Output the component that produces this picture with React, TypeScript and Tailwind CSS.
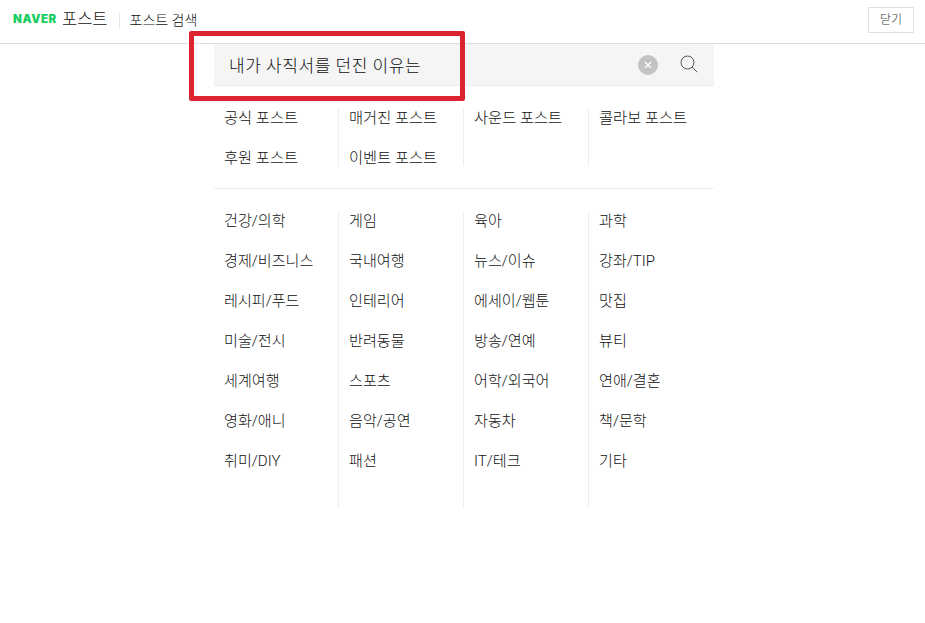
const top = [["공식 포스트", "매거진 포스트", "사운드 포스트", "콜라보 포스트"], ["후원 포스트", "이벤트 포스트"]];
const cols = [
  ["건강/의학", "경제/비즈니스", "레시피/푸드", "미술/전시", "세계여행", "영화/애니", "취미/DIY"],
  ["게임", "국내여행", "인테리어", "반려동물", "스포츠", "음악/공연", "패션"],
  ["육아", "뉴스/이슈", "에세이/웹툰", "방송/연예", "어학/외국어", "자동차", "IT/테크"],
  ["과학", "강좌/TIP", "맛집", "뷰티", "연애/결혼", "책/문학", "기타"],
];
const font = "[font-family:Roboto,'Noto_Sans_CJK_KR',sans-serif]";

export default function App() {
  return (
    <div className={`relative h-[623px] w-[925px] overflow-hidden bg-white font-light text-[#111] ${font}`}>
      <header className="flex h-[44px] items-center border-b border-[#dedede] pb-[3px] pl-[13px] pr-[11px]">
        <span className="w-[44px] text-[11.5px] font-black leading-none tracking-[0.6px] text-[#19ce60] [font-family:Inter,sans-serif]">NAVER</span>
        <span className="ml-[5px] text-[16.5px] leading-none">포스트</span>
        <span className="ml-[11px] h-[15px] w-px bg-[#e5e5e5]" />
        <span className="ml-[10px] text-[14px] leading-none">포스트 검색</span>
        <button className="ml-auto h-[26px] w-[46px] border border-[#e0e0e0] text-[12px] leading-none text-[#333]">닫기</button>
      </header>
      <main className="ml-[214px] w-[500px]">
        <div className="flex h-[42px] items-center border-b border-[#ececec] bg-[#f5f5f5] pl-[15px] pr-[16px]">
          <span className="flex-1 pt-[3px] text-[17px] leading-none tracking-[0.55px]">내가 사직서를 던진 이유는</span>
          <span className="flex h-[20px] w-[20px] items-center justify-center rounded-full bg-[#c3c3c3]">
            <svg width="8" height="8" viewBox="0 0 8 8" fill="none" stroke="#fff" strokeWidth="1.2"><path d="M1 1l6 6M7 1L1 7" /></svg>
          </span>
          <svg className="ml-[22px] -translate-y-px" width="18" height="18" viewBox="0 0 18 18" fill="none" stroke="#555" strokeWidth="1"><circle cx="7.5" cy="7.5" r="6.5" /><path d="M12 12l5.2 5.2" /></svg>
        </div>
        <div className="mt-[22px] border-b border-[#eeeeee] pb-[22px]">
          <div className="grid grid-cols-[125px_125px_125px_125px]">
            {[0, 1, 2, 3].map((c) => (
              <div key={c} className={`h-[58px] ${c === 3 ? "" : "border-r border-[#eeeeee]"}`}>
                {top.map((r, i) => (
                  <div key={i} className="mb-[18px] h-[22px] pl-[10px] text-[15.3px] leading-[20px]">{r[c]}</div>
                ))}
              </div>
            ))}
          </div>
        </div>
        <div className="mt-[22px] grid grid-cols-[125px_125px_125px_125px]">
          {cols.map((col, c) => (
            <div key={c} className={`h-[297px] ${c === 3 ? "" : "border-r border-[#eeeeee]"}`}>
              {col.map((t) => (
                <div key={t} className="mb-[18px] h-[22px] pl-[10px] text-[15.1px] leading-[20px]">{t}</div>
              ))}
            </div>
          ))}
        </div>
      </main>
      <div className="absolute left-[189px] top-[31px] h-[70px] w-[276px] rounded-[2px] border-[5px] border-[#dc2430]" />
    </div>
  );
}
